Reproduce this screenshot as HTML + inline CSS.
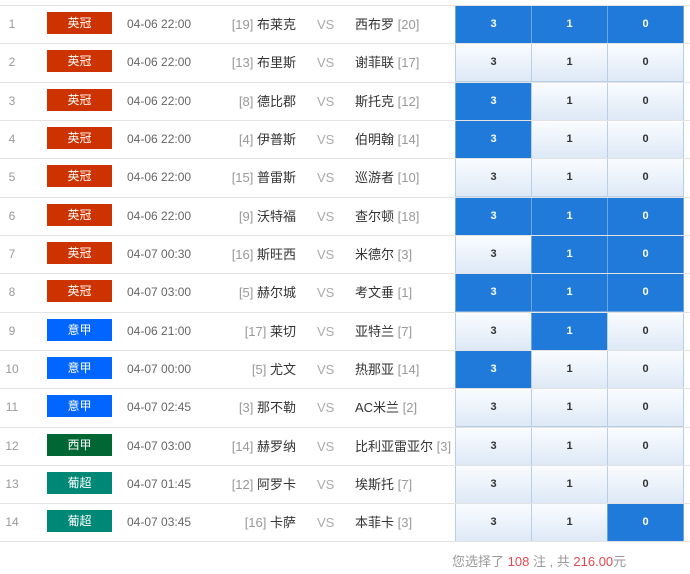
<!DOCTYPE html>
<html><head><meta charset="utf-8"><style>
body{margin:0;width:690px;height:574px;background:#fff;position:relative;overflow:hidden;font-family:"Liberation Sans","Noto Sans CJK SC",sans-serif;font-size:13px;color:#333}
.r{position:absolute;left:0;width:690px;height:38px;border-top:1px solid #e3e3e3}
.n{position:absolute;left:0;width:24px;text-align:center;top:0;line-height:37px;color:#999;font-size:12px}
.b{position:absolute;left:47px;top:6px;width:65px;height:22px;color:#fff;text-align:center;line-height:22px;font-size:12px}
.d{position:absolute;left:127px;top:0;line-height:37px;color:#666;font-size:12px}
.h{position:absolute;right:394px;top:0;line-height:37px;white-space:nowrap}
.v{position:absolute;left:317px;top:0;line-height:37px;color:#aaa}
.a{position:absolute;left:355px;top:0;line-height:37px;white-space:nowrap}
.g{color:#999}
.c{position:absolute;top:0;height:37px;width:75px;border:1px solid #b9cfe8;border-top:none;text-align:center;line-height:37px;font-weight:bold;font-size:11px;color:#333;background:linear-gradient(#fafcff,#dde9f6)}
.c.s{background:#1f7ad9;color:#fff;border-color:#6fa6e0}
.c1{left:455px}.c2{left:531px}.c3{left:607px}
.ec{background:#cc3300}.it{background:#0066ff}.es{background:#006633}.pt{background:#008877}
.last{position:absolute;left:0;top:541px;width:690px;border-top:1px solid #e3e3e3}
.f{position:absolute;left:452px;top:552px;color:#999;font-size:13px;line-height:20px}
.f b{color:#e0484f;font-weight:normal}
</style></head><body>
<div class="r" style="top:5px"><span class="n">1</span><span class="b ec">英冠</span><span class="d">04-06 22:00</span><span class="h"><span class="g">[19]</span> 布莱克</span><span class="v">VS</span><span class="a">西布罗 <span class="g">[20]</span></span><span class="c c1 s">3</span><span class="c c2 s">1</span><span class="c c3 s">0</span></div>
<div class="r" style="top:43px"><span class="n">2</span><span class="b ec">英冠</span><span class="d">04-06 22:00</span><span class="h"><span class="g">[13]</span> 布里斯</span><span class="v">VS</span><span class="a">谢菲联 <span class="g">[17]</span></span><span class="c c1">3</span><span class="c c2">1</span><span class="c c3">0</span></div>
<div class="r" style="top:82px"><span class="n">3</span><span class="b ec">英冠</span><span class="d">04-06 22:00</span><span class="h"><span class="g">[8]</span> 德比郡</span><span class="v">VS</span><span class="a">斯托克 <span class="g">[12]</span></span><span class="c c1 s">3</span><span class="c c2">1</span><span class="c c3">0</span></div>
<div class="r" style="top:120px"><span class="n">4</span><span class="b ec">英冠</span><span class="d">04-06 22:00</span><span class="h"><span class="g">[4]</span> 伊普斯</span><span class="v">VS</span><span class="a">伯明翰 <span class="g">[14]</span></span><span class="c c1 s">3</span><span class="c c2">1</span><span class="c c3">0</span></div>
<div class="r" style="top:158px"><span class="n">5</span><span class="b ec">英冠</span><span class="d">04-06 22:00</span><span class="h"><span class="g">[15]</span> 普雷斯</span><span class="v">VS</span><span class="a">巡游者 <span class="g">[10]</span></span><span class="c c1">3</span><span class="c c2">1</span><span class="c c3">0</span></div>
<div class="r" style="top:197px"><span class="n">6</span><span class="b ec">英冠</span><span class="d">04-06 22:00</span><span class="h"><span class="g">[9]</span> 沃特福</span><span class="v">VS</span><span class="a">查尔顿 <span class="g">[18]</span></span><span class="c c1 s">3</span><span class="c c2 s">1</span><span class="c c3 s">0</span></div>
<div class="r" style="top:235px"><span class="n">7</span><span class="b ec">英冠</span><span class="d">04-07 00:30</span><span class="h"><span class="g">[16]</span> 斯旺西</span><span class="v">VS</span><span class="a">米德尔 <span class="g">[3]</span></span><span class="c c1">3</span><span class="c c2 s">1</span><span class="c c3 s">0</span></div>
<div class="r" style="top:273px"><span class="n">8</span><span class="b ec">英冠</span><span class="d">04-07 03:00</span><span class="h"><span class="g">[5]</span> 赫尔城</span><span class="v">VS</span><span class="a">考文垂 <span class="g">[1]</span></span><span class="c c1 s">3</span><span class="c c2 s">1</span><span class="c c3 s">0</span></div>
<div class="r" style="top:312px"><span class="n">9</span><span class="b it">意甲</span><span class="d">04-06 21:00</span><span class="h"><span class="g">[17]</span> 莱切</span><span class="v">VS</span><span class="a">亚特兰 <span class="g">[7]</span></span><span class="c c1">3</span><span class="c c2 s">1</span><span class="c c3">0</span></div>
<div class="r" style="top:350px"><span class="n">10</span><span class="b it">意甲</span><span class="d">04-07 00:00</span><span class="h"><span class="g">[5]</span> 尤文</span><span class="v">VS</span><span class="a">热那亚 <span class="g">[14]</span></span><span class="c c1 s">3</span><span class="c c2">1</span><span class="c c3">0</span></div>
<div class="r" style="top:388px"><span class="n">11</span><span class="b it">意甲</span><span class="d">04-07 02:45</span><span class="h"><span class="g">[3]</span> 那不勒</span><span class="v">VS</span><span class="a">AC米兰 <span class="g">[2]</span></span><span class="c c1">3</span><span class="c c2">1</span><span class="c c3">0</span></div>
<div class="r" style="top:427px"><span class="n">12</span><span class="b es">西甲</span><span class="d">04-07 03:00</span><span class="h"><span class="g">[14]</span> 赫罗纳</span><span class="v">VS</span><span class="a">比利亚雷亚尔 <span class="g">[3]</span></span><span class="c c1">3</span><span class="c c2">1</span><span class="c c3">0</span></div>
<div class="r" style="top:465px"><span class="n">13</span><span class="b pt">葡超</span><span class="d">04-07 01:45</span><span class="h"><span class="g">[12]</span> 阿罗卡</span><span class="v">VS</span><span class="a">埃斯托 <span class="g">[7]</span></span><span class="c c1">3</span><span class="c c2">1</span><span class="c c3">0</span></div>
<div class="r" style="top:503px"><span class="n">14</span><span class="b pt">葡超</span><span class="d">04-07 03:45</span><span class="h"><span class="g">[16]</span> 卡萨</span><span class="v">VS</span><span class="a">本菲卡 <span class="g">[3]</span></span><span class="c c1">3</span><span class="c c2">1</span><span class="c c3 s">0</span></div>
<div class="last"></div>
<div class="f">您选择了 <b>108</b> 注 , 共 <b>216.00</b>元</div>
</body></html>
